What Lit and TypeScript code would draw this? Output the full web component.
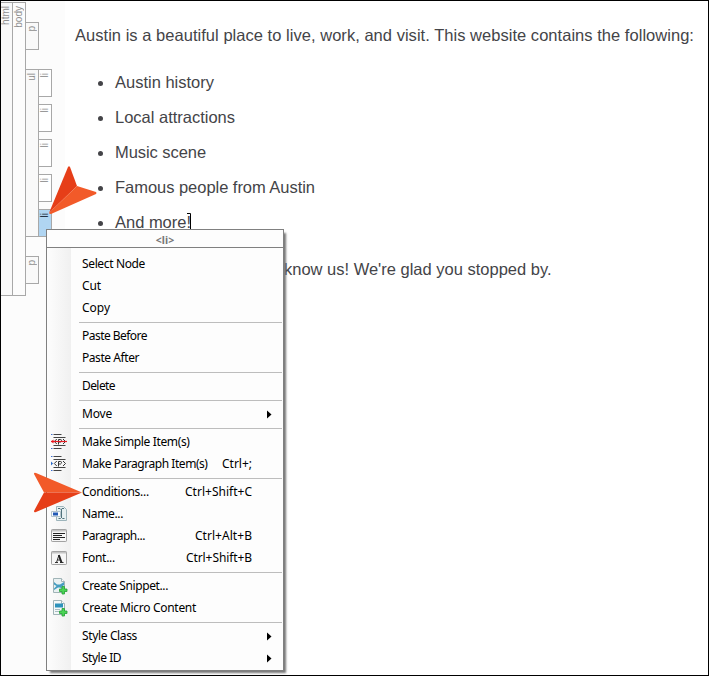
import { LitElement, html, css, svg, nothing } from "lit";
import { customElement, property } from "lit/decorators.js";

interface Item { label: string; width: number; keys?: string; keysWidth?: number; icon?: string; sub?: boolean }

const groups: Item[][] = [
  [{ label: "Select Node", width: 63 }, { label: "Cut", width: 19 }, { label: "Copy", width: 28 }],
  [{ label: "Paste Before", width: 65 }, { label: "Paste After", width: 57 }],
  [{ label: "Delete", width: 33 }],
  [{ label: "Move", width: 30, sub: true }],
  [
    { label: "Make Simple Item(s)", width: 107.5, icon: "simple" },
    { label: "Make Paragraph Item(s)", width: 125.5, keys: "Ctrl+;", keysWidth: 30, icon: "para" },
  ],
  [
    { label: "Conditions...", width: 67, keys: "Ctrl+Shift+C", keysWidth: 67 },
    { label: "Name...", width: 41, icon: "name" },
    { label: "Paragraph...", width: 63, keys: "Ctrl+Alt+B", keysWidth: 57, icon: "lines" },
    { label: "Font...", width: 33, keys: "Ctrl+Shift+B", keysWidth: 66, icon: "font" },
  ],
  [
    { label: "Create Snippet...", width: 86, icon: "snippet" },
    { label: "Create Micro Content", width: 114, icon: "micro" },
  ],
  [{ label: "Style Class", width: 55, sub: true }, { label: "Style ID", width: 39, sub: true }],
];

const plus = svg`<path d="M11 9.500h2.500v2.500H16v2.500h-2.500V17H11v-2.500H8.500V12H11z" fill="#4bd455" stroke="#23a035" stroke-width=".8"/>`;
const itemLines = svg`<path d="M2.500 1.500h8M2.500 4.500h12M2.500 12.500h12M2.500 15.500h8" stroke="#444" fill="none"/>
  <path d="M0 1.500h1.500M0 15.500h1.500" stroke="#3f6fd0"/>
  <path d="M5.800 6L3.300 8.500l2.500 2.500M12 6l2.500 2.500L12 11M7.500 11.500V6.500h2q1 0 1 1t-1 1.500h-2" stroke="#333" fill="none"/>`;

const icons: Record<string, unknown> = {
  simple: svg`${itemLines}<path d="M0 8.500h16" stroke="#e81c24" stroke-width="1.200"/><path d="M2.500 6.500v4L0 8.500z" fill="#e81c24"/>`,
  para: svg`${itemLines}<path d="M0 6.500v4l2-2z" fill="#2868c8"/>`,
  name: svg`<path d="M5.500 1.500h7l3 3v11h-10z" fill="#e6eff1" stroke="#9db4bb"/><path d="M0.500 6.500h9v5h-9z" fill="#f8fbff" stroke="#b4c4cc"/><path d="M2 7.500h5v3H2z" fill="#2359b5"/><path d="M7 3.500h2l1 1 1-1h2M10.500 4v9M7.500 13.500h2l1-1 1 1h2" stroke="#50727c" fill="none"/>`,
  lines: svg`<rect x=".5" y="2.500" width="15" height="12" rx=".7" fill="#f6f6f6" stroke="#a2a2a2"/><path d="M1 3h14v1.500H1z" fill="#c4c4c4"/><path d="M2 6.500h12M2 8.500h9M2 10.500h12M2 12.500h7" stroke="#222"/>`,
  font: svg`<rect x=".5" y="2.500" width="15" height="13" rx=".7" fill="#f6f6f6" stroke="#a2a2a2"/><path d="M1 3h14v1.500H1z" fill="#c4c4c4"/><path d="M4 13.500h3M9 13.500h3.500M5.500 13.500l2.300-7M6.300 11h3.500" fill="none" stroke="#333"/><path d="M7.800 6l2.700 7.500" stroke="#222" stroke-width="2"/>`,
  snippet: svg`<path d="M2.500 1.500h8l3 3v11h-11z" fill="#e9f1f2" stroke="#a0b4b7"/><path d="M10.500 1.500v3h3" fill="#fff" stroke="#a0b4b7"/><path d="M3 5l3 2.500h3L13 5v3l-2.500 2L13 12v1l-4-2.500H7L3 13v-1.500L5.500 9 3 7.500z" fill="#459dc0"/>${plus}`,
  micro: svg`<path d="M2.500 1.500h8l3 3v11h-11z" fill="#f4f8f8" stroke="#a0b4b7"/><path d="M10.500 1.500v3h3" fill="#fff" stroke="#a0b4b7"/><path d="M4 4.500h8v4H4z" fill="#2d92bb"/><path d="M4 10.500h5M4 12.500h4" stroke="#a7bcc2"/>${plus}`,
};

/** A run of text whose letter spacing is adjusted to fill a given width. */
@customElement("fit-text")
class FitText extends LitElement {
  static styles = css`
    :host { display: block; white-space: nowrap; }
    .run { display: inline-block; white-space: pre; }
  `;
  @property() text = "";
  @property({ type: Number }) width = 0;
  render() { return html`<span class="run">${this.text}</span>`; }
  updated() {
    const run = this.renderRoot.querySelector<HTMLElement>(".run")!;
    run.style.letterSpacing = "0px";
    const gap = (this.width - run.getBoundingClientRect().width) / this.text.length;
    run.style.letterSpacing = gap.toFixed(3) + "px";
  }
}

@customElement("context-menu")
class ContextMenu extends LitElement {
  static styles = css`
    :host { display: block; box-sizing: border-box; width: 238px; height: 442px; border: 1px solid #808080; background: #fdfdfd;
      box-shadow: 3px 3px 2px -1px #777; color: #000; font: 12px/22px "Noto Sans", "Open Sans", sans-serif; }
    .head { height: 17px; border-bottom: 1px solid #808080; text-align: center; color: #777; font: bold 10.500px/20px "Noto Sans", sans-serif; }
    .body { padding-top: 5px; height: 417px; background: linear-gradient(90deg, #fdfdfd, #f0f0f0) 0 0 / 24px 100% no-repeat; }
    .group + .group::before { content: ""; display: block; height: 1px; margin: 3px 1px 2px 32px; background: #bdbdbd; }
    .row { display: flex; height: 22px; padding-right: 31px; justify-content: space-between; }
    .left { display: flex; }
    .icon { width: 35px; padding-left: 4px; box-sizing: border-box; }
    svg { display: block; }
    .glyph { margin-top: 2px; }
    .arrow { margin: 7px -20px 0 0; }
  `;
  render() {
    return html`<div class="head">&lt;li&gt;</div>
      <div class="body">${groups.map(g => html`<div class="group">${g.map(i => html`<div class="row">
        <div class="left"><div class="icon">${i.icon ? html`<svg class="glyph" width="17" height="18" viewBox="0 0 17 18">${icons[i.icon]}</svg>` : nothing}</div>
        <fit-text .text=${i.label} .width=${i.width}></fit-text></div>
        ${i.keys ? html`<fit-text .text=${i.keys} .width=${i.keysWidth}></fit-text>` : nothing}
        ${i.sub ? html`<svg class="arrow" width="5" height="9" viewBox="0 0 5 9"><path d="M0 .5l4.500 4L0 8.500z"/></svg>` : nothing}
      </div>`)}</div>`)}</div>`;
  }
}

@customElement("structure-bars")
class StructureBars extends LitElement {
  static styles = css`
    :host { display: flex; width: 64px; padding-top: 1px; background: #fcfcfc; color: #8f8f8f; font: 10px/11px "Liberation Sans", sans-serif; }
    .bar { box-sizing: border-box; border: 1px solid #a8a8a8; background: #f9f9f9; display: flex; }
    .tag { writing-mode: vertical-rl; transform: rotate(180deg); align-self: flex-start; padding-bottom: 3px; line-height: 11px; }
    .root { width: 12px; height: 294px; border-left: 0; }
    .root .tag { margin-left: -1px; }
    .body { width: 14px; height: 294px; margin-left: -1px; background: #fcfcfc; }
    .blocks { margin: 20px 0 0 -1px; }
    .block { width: 14px; height: 28px; }
    .list { display: flex; margin: 19px 0; }
    .ul { height: 168px; }
    .items { display: grid; gap: 7px; margin-left: -1px; }
    .item { background: #fff; }
    .selected { background: #b0d5f2; color: #123; }
  `;
  render() {
    return html`<div class="bar root"><span class="tag">html</span></div>
      <div class="bar body"><span class="tag">body</span></div>
      <div class="blocks">
        <div class="bar block"><span class="tag">p</span></div>
        <div class="list"><div class="bar block ul"><span class="tag">ul</span></div>
          <div class="items">${[0, 1, 2, 3, 4].map(n => html`<div class="bar block item ${n === 4 ? "selected" : ""}"><span class="tag">li</span></div>`)}</div></div>
        <div class="bar block"><span class="tag">p</span></div>
      </div>`;
  }
}

@customElement("app-root")
class AppRoot extends LitElement {
  static styles = css`
    :host { display: flex; position: relative; box-sizing: border-box; width: 709px; height: 676px; overflow: hidden; border: 1px solid #000; background: #fff; }
    .doc { padding: 17px 0 0 10px; color: #444448; font: 16.500px/35px "Liberation Sans", sans-serif; }
    ul { list-style: none; margin: 12px 0; padding: 0 0 0 23px; }
    li { display: flex; align-items: center; gap: 12px; height: 35px; }
    .dot { width: 5px; height: 5px; margin-top: 1px; border-radius: 50%; background: #444448; }
    .caret { display: block; margin: -2px 0 0 -16px; }
    .closing { display: block; padding-left: 209px; }
    context-menu { position: absolute; left: 45px; top: 228px; }
    .pointer { position: absolute; }
    .upper { left: 48px; top: 164px; }
    .lower { left: 32px; top: 470px; }
  `;
  render() {
    return html`<structure-bars></structure-bars>
      <div class="doc">
        <fit-text .text=${"Austin is a beautiful place to live, work, and visit. This website contains the following:"} .width=${619}></fit-text>
        <ul>${([["Austin history", 99], ["Local attractions", 120], ["Music scene", 91], ["Famous people from Austin", 200], ["And more!", 76]] as [string, number][]).map(([t, w]) => html`<li>
          <span class="dot"></span><fit-text .text=${t} .width=${w}></fit-text>${t === "And more!" ? html`<svg class="caret" width="6" height="17" viewBox="0 0 6 17"><path d="M0 .5h3.500v16" fill="none" stroke="#000"/></svg>` : nothing}</li>`)}</ul>
        <fit-text class="closing" .text=${"know us! We're glad you stopped by."} .width=${267.5}></fit-text>
      </div>
      <context-menu></context-menu>
      <svg class="pointer upper" width="49" height="50" viewBox="0 0 49 50"><path d="M19 2q1-1.500 2 0l7 19L0 48z" fill="#e63e18"/><path d="M28 21l19 6q1 1 0 2L2 49q-2 0-2-1z" fill="#f25a29"/></svg>
      <svg class="pointer lower" width="50" height="44" viewBox="0 0 50 44"><path d="M1 3q0-2 2-1l46 19.500H11z" fill="#f25a29"/><path d="M11 21.500h38L3 41q-2 1-2-1z" fill="#e63e18"/></svg>`;
  }
}
